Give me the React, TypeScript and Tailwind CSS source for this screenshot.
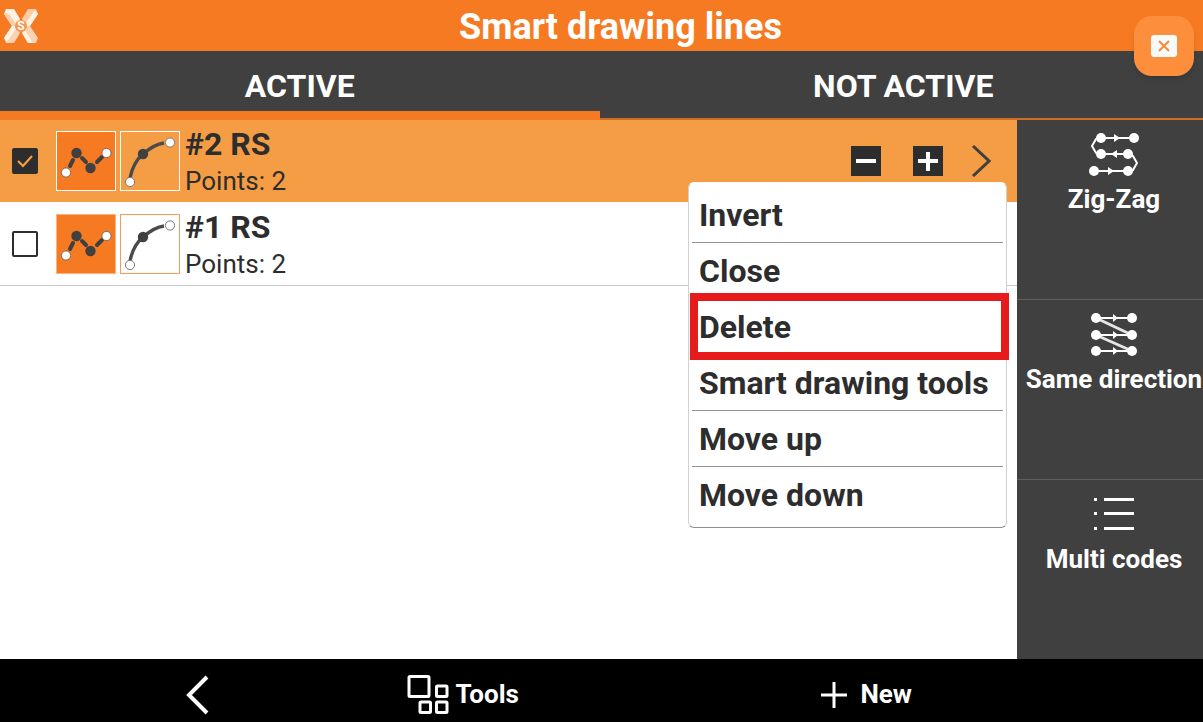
import { useState } from 'react'
import type { ReactNode } from 'react'
import clsx from 'clsx'

type Line = { id: number; name: string; points: number; checked: boolean }

const initialLines: Line[] = [
  { id: 2, name: '#2 RS', points: 2, checked: true },
  { id: 1, name: '#1 RS', points: 2, checked: false }
]

const menuItems = ['Invert', 'Close', 'Delete', 'Smart drawing tools', 'Move up', 'Move down']

function LogoIcon() {
  return (
    <svg viewBox="0 0 34 34" className="w-[34px] h-[34px]" aria-hidden="true">
      <path d="M2 0h8l6 10-2 7H8L0 5z" fill="#fff1e4" />
      <path d="M0 5l4-1 8 11-2 3-2-1z" fill="#fbcfac" />
      <path d="M32 0h-8l-6 10 2 7h6l8-12z" fill="#fbcba5" />
      <path d="M34 5l-3-4-10 14 1 2h4z" fill="#fff1e4" />
      <path d="M2 34h8l6-10-2-7H8L0 29z" fill="#fbd3b3" />
      <path d="M0 29l3 4 9-13-1-3H8z" fill="#fff1e4" />
      <path d="M32 34h-8l-6-10 2-7h6l8 12z" fill="#fbd3b3" />
      <path d="M24 34l-6-10 3-3 8 13z" fill="#fff1e4" />
      <circle cx="17" cy="17" r="6" fill="#f7944d" />
      <text
        x="17"
        y="21"
        textAnchor="middle"
        fontSize="12"
        fontWeight="700"
        fill="#fff"
        fontFamily="Roboto, sans-serif"
      >
        S
      </text>
    </svg>
  )
}

function PolylineIcon() {
  return (
    <svg viewBox="1 1 58 58" className="size-full" aria-hidden="true">
      <g stroke="#404040" strokeWidth="4" strokeLinecap="round">
        <path d="M14 35l3-6M26 27l4 4M41 31l5-5" />
      </g>
      <circle cx="20.500" cy="22" r="5.200" fill="#404040" />
      <circle cx="34.500" cy="37" r="5.200" fill="#404040" />
      <circle cx="10" cy="41.500" r="4.600" fill="#fff" stroke="#7a6a5c" />
      <circle cx="50.500" cy="22" r="4.600" fill="#fff" stroke="#7a6a5c" />
    </svg>
  )
}

function CurveIcon() {
  return (
    <svg viewBox="1 1 58 58" className="size-full" fill="none" aria-hidden="true">
      <path d="M10 47C12 37 16 29 23 23S36 13 44 12" stroke="#4b4b4b" strokeWidth="3.400" />
      <circle cx="23" cy="23" r="5.200" fill="#404040" />
      <circle cx="10" cy="51" r="4.600" fill="#fff" stroke="#7a7a7a" />
      <circle cx="50" cy="11.500" r="4.600" fill="#fff" stroke="#7a7a7a" />
    </svg>
  )
}

function ZigZagIcon() {
  return (
    <svg viewBox="0 0 52 46" className="w-[52px] h-[46px]" fill="none" aria-hidden="true">
      <path d="M13 6h33M13 22h27M6 39h34" stroke="#fff" strokeWidth="2" />
      <path d="M12 5L8 7l-4 7 4 7 5 2M40 22l5 2 4 7-4 7-5 1" stroke="#fff" strokeWidth="2" />
      <path d="M26 2l6 4-6 4zM29 18l-6 4 6 4zM20 35l6 4-6 4z" fill="#fff" />
      <g fill="#fff">
        <circle cx="13" cy="6" r="5" />
        <circle cx="46" cy="6" r="5" />
        <circle cx="13" cy="22" r="5" />
        <circle cx="40" cy="22" r="5" />
        <circle cx="6" cy="39" r="5" />
        <circle cx="40" cy="39" r="5" />
      </g>
    </svg>
  )
}

function SameDirectionIcon() {
  return (
    <svg viewBox="0 0 52 46" className="w-[52px] h-[46px]" fill="none" aria-hidden="true">
      <path d="M8 6h36M8 23h36M8 39h36" stroke="#fff" strokeWidth="2" />
      <path d="M8 6l36 17M8 23l36 16" stroke="#e6e6e6" strokeWidth="3" />
      <path d="M25 2l5 4-5 4zM25 19l5 4-5 4zM25 35l5 4-5 4z" fill="#fff" />
      <g fill="#fff">
        <circle cx="8" cy="6" r="5" />
        <circle cx="44" cy="6" r="5" />
        <circle cx="8" cy="23" r="5" />
        <circle cx="44" cy="23" r="5" />
        <circle cx="8" cy="39" r="5" />
        <circle cx="44" cy="39" r="5" />
      </g>
    </svg>
  )
}

function ListIcon() {
  return (
    <svg viewBox="0 0 52 46" className="w-[52px] h-[46px]" fill="#fff" aria-hidden="true">
      <path d="M6 6h3v3H6zM16 6h30v3H16zM6 20h3v3H6zM16 20h30v3H16zM6 35h3v3H6zM16 35h30v3H16z" />
    </svg>
  )
}

function SideButton({ label, icon, first }: { label: string; icon: ReactNode; first?: boolean }) {
  return (
    <button
      className={clsx(
        'flex-1 flex flex-col items-center pt-3 pl-2 gap-[3px]',
        !first && 'border-t border-[#5f5f5f]'
      )}
    >
      {icon}
      <span className="text-[26px] leading-9 font-bold whitespace-nowrap">{label}</span>
    </button>
  )
}

export default function App() {
  const [tab, setTab] = useState<'active' | 'inactive'>('active')
  const [lines, setLines] = useState(initialLines)
  const [openMenu, setOpenMenu] = useState<number | null>(2)

  const toggleLine = (id: number) => {
    setLines(lines.map((line) => (line.id === id ? { ...line, checked: !line.checked } : line)))
  }

  return (
    <div className="relative min-h-screen flex flex-col bg-white text-[#2d2d2d] font-[Roboto,sans-serif]">
      {/* Title bar */}
      <header className="flex items-center h-[51px] pl-1 bg-[#f67a21] text-white">
        <LogoIcon />
        <h1 className="flex-1 text-center text-[36px] leading-10 font-bold pt-0.5">Smart drawing lines</h1>
      </header>
      <button
        aria-label="Close"
        className="absolute top-4 right-[9px] z-10 size-[60px] flex items-center justify-center rounded-[18px] bg-[#fd8e3c] shadow-md"
      >
        <svg viewBox="0 0 26 22" className="w-[26px] h-[22px]" aria-hidden="true">
          <rect width="26" height="22" rx="3" fill="#fafafa" />
          <path d="M8 6l10 10M18 6L8 16" stroke="#f98a38" strokeWidth="2" />
        </svg>
      </button>

      {/* Tabs */}
      <div role="tablist" className="flex gap-1 h-[69px] bg-[#404040] border-b-2 border-[#d06c24] text-white">
        {(['active', 'inactive'] as const).map((key) => (
          <button
            key={key}
            role="tab"
            aria-selected={tab === key}
            onClick={() => setTab(key)}
            className={clsx(
              'flex-1 pt-2.5 text-[32px] leading-10 font-bold border-b-[9px] -mb-0.5',
              tab === key ? 'border-[#f67a21]' : 'border-transparent'
            )}
          >
            {key === 'active' ? 'ACTIVE' : 'NOT ACTIVE'}
          </button>
        ))}
      </div>

      <div className="flex-1 flex">
        <main className="flex-1">
          <ul>
            {lines.map((line) => (
              <li
                key={line.id}
                className={clsx(
                  'relative flex items-center pl-3 pr-[26px]',
                  line.checked ? 'h-[82px] bg-[#f59d45]' : 'h-[84px] border-b border-[#c8c8c8]'
                )}
              >
                <label className="relative size-[26px] mr-[18px]">
                  <input
                    type="checkbox"
                    checked={line.checked}
                    onChange={() => toggleLine(line.id)}
                    aria-label={line.name}
                    className="block size-[26px] appearance-none rounded-xs border-2 border-[#2d2d2d] checked:bg-[#2d2d2d]"
                  />
                  {line.checked && (
                    <svg viewBox="0 0 26 26" className="absolute inset-0 pointer-events-none" aria-hidden="true">
                      <path d="M6 13l5 5 9-10" fill="none" stroke="#f59d45" strokeWidth="2.200" />
                    </svg>
                  )}
                </label>
                <div
                  className={clsx(
                    'size-[60px] mr-1 border bg-[#f67a21]',
                    line.checked ? 'border-white' : 'border-[#fbb27c]'
                  )}
                >
                  <PolylineIcon />
                </div>
                <div
                  className={clsx('size-[60px] mr-[5px] border', line.checked ? 'border-white' : 'border-[#f99b58]')}
                >
                  <CurveIcon />
                </div>
                <div className="flex-1 pt-1">
                  <h2 className="text-[32px] leading-[37px] font-bold">{line.name}</h2>
                  <p className="text-[26px] leading-[37px]">Points: {line.points}</p>
                </div>
                {line.checked && (
                  <div className="flex items-center">
                    <button aria-label="Remove point" className="mr-8">
                      <svg viewBox="0 0 30 30" className="size-[30px]" aria-hidden="true">
                        <path fill="#2d2d2d" d="M0 0h30v30H0z" />
                        <path d="M5 15h20" stroke="#fff" strokeWidth="4" />
                      </svg>
                    </button>
                    <button aria-label="Add point" className="mr-7">
                      <svg viewBox="0 0 30 30" className="size-[30px]" aria-hidden="true">
                        <path fill="#2d2d2d" d="M0 0h30v30H0z" />
                        <path d="M5 15h20M15 6v19" stroke="#fff" strokeWidth="4" />
                      </svg>
                    </button>
                    <button
                      aria-label="Line menu"
                      aria-expanded={openMenu === line.id}
                      onClick={() => setOpenMenu(openMenu === line.id ? null : line.id)}
                    >
                      <svg viewBox="0 0 20 32" className="w-5 h-8" fill="none" aria-hidden="true">
                        <path d="M2 1l16 15L2 31" stroke="#404040" strokeWidth="3" />
                      </svg>
                    </button>
                  </div>
                )}

                {/* Line menu */}
                {openMenu === line.id && (
                  <ul
                    role="menu"
                    className="absolute top-[62px] right-2.5 z-10 w-[319px] px-[3px] pt-1 pb-1 rounded-md border border-t-white border-x-[#d0d0d0] border-b-[#8f8f8f] bg-white"
                  >
                    {menuItems.map((item) => (
                      <li
                        key={item}
                        role="none"
                        className="relative h-14 border-b border-[#949494] last:border-transparent"
                      >
                        <button
                          role="menuitem"
                          className="w-full h-full pt-px pl-[7px] text-left text-[32px] font-bold whitespace-nowrap"
                        >
                          {item}
                        </button>
                        {item === 'Delete' && (
                          <span className="absolute -inset-y-1.5 -left-0.5 -right-1.5 z-10 border-8 border-[#e71b1b] pointer-events-none" />
                        )}
                      </li>
                    ))}
                  </ul>
                )}
              </li>
            ))}
          </ul>
        </main>

        {/* Drawing modes */}
        <aside className="w-[186px] flex flex-col overflow-hidden bg-[#404040] text-white">
          <SideButton label="Zig-Zag" icon={<ZigZagIcon />} first />
          <SideButton label="Same direction" icon={<SameDirectionIcon />} />
          <SideButton label="Multi codes" icon={<ListIcon />} />
        </aside>
      </div>

      {/* Bottom bar */}
      <footer className="grid grid-cols-[33fr_11fr_56fr] items-center justify-items-center h-[63px] pt-2 bg-black text-white text-[26px] font-bold">
        <button aria-label="Back">
          <svg viewBox="0 0 24 40" className="w-6 h-10" fill="none" aria-hidden="true">
            <path d="M21 2L3 20l18 18" stroke="#fff" strokeWidth="4" />
          </svg>
        </button>
        <button className="flex items-center gap-1.5">
          <svg viewBox="0 0 42 40" className="w-[42px] h-10" fill="none" stroke="#fff" strokeWidth="3" aria-hidden="true">
            <rect x="2" y="1.500" width="20" height="20" rx="1" />
            <rect x="29.500" y="11" width="10.500" height="10.500" rx="1" />
            <rect x="13" y="27" width="10.500" height="10.500" rx="1" />
            <rect x="29.500" y="27" width="10.500" height="10.500" rx="1" />
          </svg>
          Tools
        </button>
        <button className="flex items-center gap-3">
          <svg viewBox="0 0 28 28" className="size-7" stroke="#fff" strokeWidth="3" aria-hidden="true">
            <path d="M1 14h26M14 1v26" />
          </svg>
          New
        </button>
      </footer>
    </div>
  )
}
